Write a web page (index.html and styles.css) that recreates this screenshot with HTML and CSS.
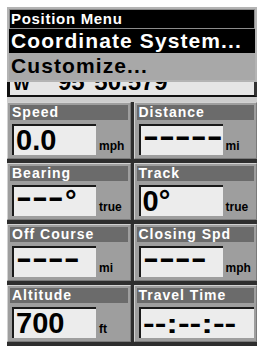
FILE: index.html
```html
<!DOCTYPE html>
<html>
<head>
<meta charset="utf-8">
<link rel="stylesheet" href="styles.css">
</head>
<body>
<div class="screen">
  <div class="menu">
    <div class="menu-title">Position Menu</div>
    <div class="menu-item selected">Coordinate System...</div>
    <div class="menu-item plain">Customize...</div>
  </div>
  <div class="coord-row">
    <div class="coord-line"><span class="coord-hemi">W</span><span class="coord-val">95°50.579</span></div>
  </div>
  <div class="grid">
    <div class="cell">
      <div class="cell-head">Speed</div>
      <div class="cell-body">
        <div class="box"><span class="val">0.0</span></div>
        <span class="unit">mph</span>
      </div>
    </div>
    <div class="cell">
      <div class="cell-head">Distance</div>
      <div class="cell-body">
        <div class="box"><span class="val dashes">-----</span></div>
        <span class="unit">mi</span>
      </div>
    </div>
    <div class="cell">
      <div class="cell-head">Bearing</div>
      <div class="cell-body">
        <div class="box"><span class="val"><span class="dashes">---</span><span class="deg">°</span></span></div>
        <span class="unit">true</span>
      </div>
    </div>
    <div class="cell">
      <div class="cell-head">Track</div>
      <div class="cell-body">
        <div class="box"><span class="val">0°</span></div>
        <span class="unit">true</span>
      </div>
    </div>
    <div class="cell">
      <div class="cell-head">Off Course</div>
      <div class="cell-body">
        <div class="box"><span class="val dashes">----</span></div>
        <span class="unit">mi</span>
      </div>
    </div>
    <div class="cell">
      <div class="cell-head">Closing Spd</div>
      <div class="cell-body">
        <div class="box"><span class="val dashes">----</span></div>
        <span class="unit">mph</span>
      </div>
    </div>
    <div class="cell">
      <div class="cell-head">Altitude</div>
      <div class="cell-body">
        <div class="box"><span class="val">700</span></div>
        <span class="unit">ft</span>
      </div>
    </div>
    <div class="cell">
      <div class="cell-head">Travel Time</div>
      <div class="cell-body">
        <div class="box wide"><span class="val time">--:--:--</span></div>
      </div>
    </div>
  </div>
</div>
</body>
</html>
```
FILE: styles.css
```css
* { box-sizing: border-box; }
body {
  margin: 0;
  background: #fff;
  font-family: "Liberation Sans", Arial, sans-serif;
}
.screen {
  margin: 7px 0 0 7px;
  width: 250px;
  height: 339px;
  overflow: hidden;
  background: #2c2c2c;
  display: flex;
  flex-direction: column;
}
.menu {
  border: 2px solid #b4b4b4;
  background: #000;
}
.menu-title {
  height: 20px;
  border: 1px solid #8c8c8c;
  color: #fff;
  font-weight: 700;
  font-size: 15px;
  letter-spacing: 0.7px;
  line-height: 18px;
  padding-left: 1px;
}
.menu-item {
  height: 24px;
  font-size: 21px;
  font-weight: 700;
  letter-spacing: 1.1px;
  line-height: 24px;
  padding-left: 2px;
  white-space: nowrap;
}
.selected { background: #000; color: #fff; }
.plain { background: #a8a8a8; color: #000; height: 27px; line-height: 26px; }
.coord-row {
  height: 15px;
  background: #e6e6e6;
  border-left: 3px solid #111;
  border-right: 3px solid #333;
  border-bottom: 2px solid #111;
  overflow: hidden;
}
.coord-line {
  display: flex;
  align-items: baseline;
  margin-top: -12px;
  font-weight: 700;
  font-size: 24px;
  line-height: 24px;
  color: #000;
}
.coord-hemi { width: 48px; padding-left: 3px; font-size: 18px; }
.grid {
  flex: 1;
  display: grid;
  grid-template-columns: 1fr 1fr;
  column-gap: 3px;
  row-gap: 4px;
  align-content: start;
  border-top: 5px solid #cdcdcd;
  background: #2e2e2e;
}
.cell {
  background: #9e9e9e;
  border: 1px solid;
  border-color: #d2d2d2 #7a7a7a #7a7a7a #d2d2d2;
  padding: 2px 2px 3px 2px;
}
.cell-head {
  height: 15px;
  background: #6b6b6b;
  color: #fff;
  font-weight: 700;
  font-size: 14px;
  letter-spacing: 1px;
  line-height: 15px;
  padding-left: 2px;
  margin-bottom: 4px;
  white-space: nowrap;
}
.cell-body {
  display: flex;
  align-items: flex-end;
  gap: 3px;
  padding-left: 2px;
}
.box {
  width: 84px;
  height: 31px;
  flex: none;
  background: #ececec;
  border-top: 2px solid #1a1a1a;
  border-left: 2px solid #1a1a1a;
  display: flex;
  align-items: flex-end;
  padding-left: 2px;
  overflow: hidden;
}
.box.wide { width: 115px; }
.val {
  font-size: 29px;
  font-weight: 700;
  line-height: 29px;
  color: #000;
  white-space: nowrap;
}
.dashes {
  display: inline-block;
  transform: translateY(-4px) scaleX(1.65);
  transform-origin: left center;
}
.deg { margin-left: 20px; }
.time {
  display: inline-block;
  font-size: 28px;
  transform: scaleX(1.25);
  transform-origin: left center;
}
.unit {
  font-size: 12px;
  font-weight: 700;
  line-height: 12px;
  padding-bottom: 3px;
  color: #000;
}
```
